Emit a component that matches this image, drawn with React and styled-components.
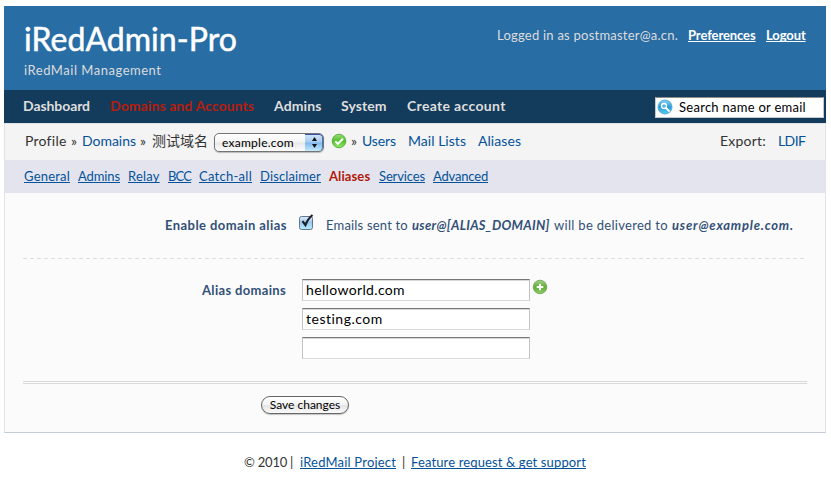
import React from 'react';
import styled, { createGlobalStyle } from 'styled-components';

const Global = createGlobalStyle`
  * { box-sizing: border-box; }
  body {
    margin: 0;
    background: #fff;
    color: #333;
    font: 13px/20px Lato, "Noto Sans CJK SC", sans-serif;
  }
`;

const Page = styled.div`
  width: 822px;
  margin: 6px 0 0 4px;
`;

const Text = styled.span`
  flex: none;
  display: inline-block;
  white-space: pre;
  width: ${(p) => (p.$w ? `${p.$w}px` : 'auto')};
  margin-left: ${(p) => p.$ml || 0}px;
  letter-spacing: ${(p) => p.$ls || 0}px;
`;

const Link = styled(Text).attrs({ as: 'a', href: '#' })`
  color: #04529a;
  text-decoration: ${(p) => (p.$plain ? 'none' : 'underline')};
  text-decoration-thickness: 1px;
  text-underline-offset: 1px;
  text-decoration-skip-ink: none;
`;

const Header = styled.header`
  display: flex;
  justify-content: space-between;
  height: 84px;
  padding: 13px 20px 0 20px;
  background: #296da5;
  color: #dcdcdc;
`;

const Title = styled.h1`
  margin: 0 0 1px;
  color: #fff;
  font-size: 32px;
  font-weight: 400;
  line-height: 40px;
  letter-spacing: 0.05px;
  -webkit-text-stroke: 0.5px #fff;
`;

const Account = styled.div`
  display: flex;
  padding-top: 6px;
  height: 26px;
`;

const AccountLink = styled(Link)`
  color: #fff;
  font-weight: 700;
`;

const Nav = styled.nav`
  display: flex;
  align-items: center;
  height: 33px;
  padding: 0 2px 1px 19px;
  background: #133b5c;
`;

const NavItem = styled(Text)`
  color: ${(p) => (p.$active ? '#b81c0c' : '#dedede')};
  font-size: 14px;
  font-weight: 700;
`;

const Search = styled.div`
  display: flex;
  align-items: center;
  width: 169px;
  height: 21px;
  margin: 2px 0 0 auto;
  padding-left: 1px;
  border: 1px solid #c4c9ce;
  border-top: 1px solid #8c8c8c;
  background: #fff;
  color: #000;
`;

const Panel = styled.main`
  border: 1px solid #dfe3ec;
  border-bottom-color: #c3ccd6;
  background: #fbfbfb;
  height: 310px;
`;

const Crumbs = styled.div`
  display: flex;
  align-items: center;
  height: 36px;
  padding: 0 20px 2px 20px;
  background: #f4f4f4;
  font-size: 14px;
`;

const Select = styled.div`
  display: flex;
  justify-content: space-between;
  width: 110px;
  height: 19px;
  margin: 2px 0 0 6px;
  padding-left: 7px;
  overflow: hidden;
  border: 1px solid #747474;
  border-radius: 5px;
  background: linear-gradient(#fff, #f4f4f4 48%, #e8e8e8 52%, #fcfcfc);
  box-shadow: 0 1px 1px #bbb;
  color: #000;
  font-size: 12px;
  line-height: 17px;
`;

const Stepper = styled.span`
  display: flex;
  width: 18px;
  justify-content: center;
  align-items: center;
  background: linear-gradient(#d3e6f8, #a5cbf0 48%, #80b8ec 52%, #c4eafc);
  box-shadow: inset 0 1px 0 #3a4fa0, inset -1px 0 0 #4b76b3;
  border-radius: 0 4px 4px 0;
`;

const IconBox = styled.span`
  display: flex;
  margin: ${(p) => p.$m || 0};
`;

const Tabs = styled.div`
  display: flex;
  align-items: center;
  height: 33px;
  padding: 0 0 2px 19px;
  background: #e3e4ed;
`;

const ActiveTab = styled(Text)`
  color: #b2190c;
  font-weight: 700;
`;

const Form = styled.div`
  padding: 0 18px;
  color: #325077;
`;

const OptionRow = styled.div`
  display: flex;
  height: 65px;
  padding-top: 22px;
`;

const Dash = styled.div`
  height: 1px;
  background: repeating-linear-gradient(90deg, #dedede 0 4px, transparent 4px 7px);
`;

const AliasRow = styled.div`
  display: flex;
  height: 122px;
  padding-top: 20px;
`;

const Label = styled(Text)`
  font-weight: 700;
`;

const AliasLabel = styled(Label)`
  padding-top: 1px;
`;

const Strong = styled(Text)`
  font-weight: 700;
  font-style: italic;
`;

const Fields = styled.div`
  display: flex;
  flex-direction: column;
  gap: 7px;
  margin-left: 16px;
`;

const Field = styled.div`
  width: 228px;
  height: 22px;
  padding-left: 3px;
  border: 1px solid #c2c2c2;
  border-top: 1px solid #777;
  border-bottom-color: #dadada;
  box-shadow: inset 0 1px 0 #d8d8d8;
  background: #fff;
  color: #000;
  font-size: 14px;
  line-height: 20px;
`;

const DoubleRule = styled.div`
  height: 3px;
  border-top: 1px solid #d9d9d9;
  border-bottom: 1px solid #d9d9d9;
`;

const Save = styled.button`
  display: block;
  width: 88px;
  height: 18px;
  margin: 12px 0 0 238px;
  padding: 0;
  border: 1px solid #666;
  border-radius: 9px;
  background: linear-gradient(#fff, #f3f3f3 48%, #e5e5e5 52%, #fafafa);
  box-shadow: 0 1px 1px #c4c4c4;
  color: #000;
  font: 12px/16px Lato, sans-serif;
`;

const Footer = styled.footer`
  display: flex;
  padding: 19px 0 0 240px;
`;

const SearchIcon = () => (
  <svg width="16" height="16" viewBox="0 0 16 16">
    <defs>
      <linearGradient id="sky" x1="0" y1="0" x2="0" y2="1">
        <stop offset="0" stopColor="#8bd4f4" />
        <stop offset=".5" stopColor="#279cd8" />
        <stop offset="1" stopColor="#55cdf4" />
      </linearGradient>
    </defs>
    <circle cx="8" cy="8" r="7" fill="url(#sky)" stroke="#5aabd4" />
    <circle cx="7" cy="7" r="2.5" fill="#56b7e6" stroke="#fff" strokeWidth="1.3" />
    <path d="M9 9l3 3" stroke="#fff" strokeWidth="1.8" strokeLinecap="round" />
  </svg>
);

const GreenBadge = ({ add }) => (
  <svg width="16" height="16" viewBox="0 0 16 16">
    <defs>
      <linearGradient id={add ? 'leaf' : 'lime'} x1="0" y1="0" x2="0" y2="1">
        <stop offset="0" stopColor={add ? '#a3d283' : '#9bdd7d'} />
        <stop offset=".5" stopColor={add ? '#5fac37' : '#4fc228'} />
        <stop offset="1" stopColor={add ? '#8fce66' : '#96ec68'} />
      </linearGradient>
    </defs>
    <circle cx="8" cy="8" r="6.8" fill={`url(#${add ? 'leaf' : 'lime'})`} stroke={add ? '#76a85c' : '#54a83b'} strokeWidth=".9" />
    {add ? (
      <path d="M8 4.7v6.6M4.7 8h6.6" stroke="#fff" strokeWidth="2" />
    ) : (
      <path d="M4.2 8.2l2.7 2.6 5-5.1" fill="none" stroke="#fff" strokeWidth="2.1" />
    )}
  </svg>
);

const Checkbox = () => (
  <svg width="17" height="18" viewBox="0 0 17 18">
    <defs>
      <linearGradient id="aqua" x1="0" y1="0" x2="0" y2="1">
        <stop offset="0" stopColor="#e0eefa" />
        <stop offset=".45" stopColor="#9cc8f0" />
        <stop offset="1" stopColor="#b4ecff" />
      </linearGradient>
    </defs>
    <rect x="1.5" y="4.5" width="13" height="13" rx="2" fill="url(#aqua)" stroke="#65758c" />
    <path d="M4.5 9.2L7.4 13C9.2 8.8 11 5.7 14.5 3" fill="none" stroke="#1c2028" strokeWidth="2.2" />
  </svg>
);

const tabs = [
  ['General', 46, 0.21, 0],
  ['Admins', 42, -0.11, 8],
  ['Relay', 32, 0.2, 8],
  ['BCC', 23, -0.8, 8],
  ['Catch-all', 53, 0.27, 8],
  ['Disclaimer', 61, 0.13, 8],
  ['Aliases', 42, 0.1, 8],
  ['Services', 46, -0.13, 8],
  ['Advanced', 55, -0.18, 8],
];

export default function App() {
  return (
    <Page>
      <Global />
      <Header>
        <div>
          <Title>iRedAdmin-Pro</Title>
          <Text $ls={0.52}>iRedMail Management</Text>
        </div>
        <Account>
          <Text $w={181} $ls={0.23}>Logged in as postmaster@a.cn.</Text>
          <AccountLink $w={68} $ml={10} $ls={-0.1}>Preferences</AccountLink>
          <AccountLink $w={40} $ml={10} $ls={-0.1}>Logout</AccountLink>
        </Account>
      </Header>
      <Nav>
        <NavItem $w={67} $ls={-0.08}>Dashboard</NavItem>
        <NavItem $active $w={144} $ml={20} $ls={0.09}>Domains and Accounts</NavItem>
        <NavItem $w={48} $ml={20} $ls={0.1}>Admins</NavItem>
        <NavItem $w={46} $ml={19} $ls={0.1}>System</NavItem>
        <NavItem $w={99} $ml={20} $ls={0.33}>Create account</NavItem>
        <Search>
          <SearchIcon />
          <Text $ml={6} $ls={0.27}>Search name or email</Text>
        </Search>
      </Nav>
      <Panel>
        <Crumbs>
          <Text $w={42} $ls={0.25}>Profile</Text>
          <Text $w={7} $ml={4}>»</Text>
          <Link $plain $w={54} $ml={4} $ls={-0.03}>Domains</Link>
          <Text $w={7} $ml={4}>»</Text>
          <Text $w={56} $ml={5}>测试域名</Text>
          <Select>
            <Text $ls={0.26}>example.com</Text>
            <Stepper>
              <svg width="7" height="11" viewBox="0 0 7 11">
                <path d="M3.5 0L6 4H1zM3.5 11L6 7H1z" fill="#111" />
              </svg>
            </Stepper>
          </Select>
          <IconBox $m="0 0 0 7px"><GreenBadge /></IconBox>
          <Text $w={7} $ml={4}>»</Text>
          <Link $plain $w={34} $ml={4} $ls={-0.11}>Users</Link>
          <Link $plain $w={58} $ml={12} $ls={0.03}>Mail Lists</Link>
          <Link $plain $w={43} $ml={12} $ls={0.06}>Aliases</Link>
          <Text $ml={199} $w={46} $ls={0.22}>Export:</Text>
          <Link $plain $ml={12} $w={27} $ls={-0.6}>LDIF</Link>
        </Crumbs>
        <Tabs>
          {tabs.map(([name, w, ls, ml]) =>
            name === 'Aliases' ? (
              <ActiveTab key={name} $w={w} $ls={ls} $ml={ml}>{name}</ActiveTab>
            ) : (
              <Link key={name} $w={w} $ls={ls} $ml={ml}>{name}</Link>
            )
          )}
        </Tabs>
        <Form>
          <OptionRow>
            <Label $w={122} $ml={142} $ls={0.44}>Enable domain alias</Label>
            <IconBox $m="-3px 0 0 11px"><Checkbox /></IconBox>
            <Text $w={82} $ml={11} $ls={0.19}>Emails sent to</Text>
            <Strong $w={138} $ml={4} $ls={0.3}>user@[ALIAS_DOMAIN]</Strong>
            <Text $w={114} $ml={4} $ls={0.3}>will be delivered to</Text>
            <Strong $w={121} $ml={4} $ls={0.8}>user@example.com.</Strong>
          </OptionRow>
          <Dash />
          <AliasRow>
            <AliasLabel $w={84} $ml={179} $ls={0.33}>Alias domains</AliasLabel>
            <Fields>
              <Field><Text $ls={0.35}>helloworld.com</Text></Field>
              <Field><Text $ls={0.5}>testing.com</Text></Field>
              <Field />
            </Fields>
            <IconBox $m="0 0 0 2px"><GreenBadge add /></IconBox>
          </AliasRow>
          <DoubleRule />
          <Save>Save changes</Save>
        </Form>
      </Panel>
      <Footer>
        <Text $w={46} $ls={-0.2}>© 2010</Text>
        <Text $w={4}>|</Text>
        <Link $w={96} $ml={6} $ls={0.19}>iRedMail Project</Link>
        <Text $w={3} $ml={6}>|</Text>
        <Link $w={175} $ml={6} $ls={0.13}>Feature request &amp; get support</Link>
      </Footer>
    </Page>
  );
}
